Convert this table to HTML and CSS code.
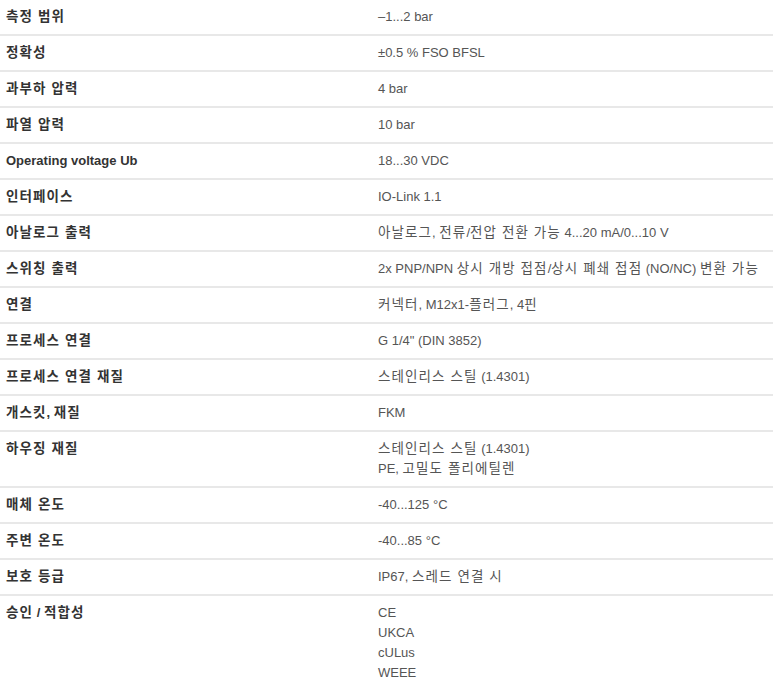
FILE: index.html
```html
<!DOCTYPE html>
<html lang="ko">
<head>
<meta charset="utf-8">
<link rel="stylesheet" href="styles.css">
</head>
<body>
<table class="specs">
<tbody>
<tr><th><span class="ko">측정 범위</span></th><td>–1...2 bar</td></tr>
<tr><th><span class="ko">정확성</span></th><td>±0.5 % FSO BFSL</td></tr>
<tr><th><span class="ko">과부하 압력</span></th><td>4 bar</td></tr>
<tr><th><span class="ko">파열 압력</span></th><td>10 bar</td></tr>
<tr><th>Operating voltage Ub</th><td>18...30 VDC</td></tr>
<tr><th><span class="ko">인터페이스</span></th><td>IO-Link 1.1</td></tr>
<tr><th><span class="ko">아날로그 출력</span></th><td><span class="ko">아날로그</span>, <span class="ko">전류</span>/<span class="ko">전압 전환 가능</span> 4...20 mA/0...10 V</td></tr>
<tr><th><span class="ko">스위칭 출력</span></th><td class="nowrap">2x PNP/NPN <span class="ko">상시 개방 접점</span>/<span class="ko">상시 폐쇄 접점</span> (NO/NC) <span class="ko">변환 가능</span></td></tr>
<tr><th><span class="ko">연결</span></th><td><span class="ko">커넥터</span>, M12x1-<span class="ko">플러그</span>, 4<span class="ko">핀</span></td></tr>
<tr><th><span class="ko">프로세스 연결</span></th><td>G 1/4" (DIN 3852)</td></tr>
<tr><th><span class="ko">프로세스 연결 재질</span></th><td><span class="ko">스테인리스 스틸</span> (1.4301)</td></tr>
<tr><th><span class="ko">개스킷</span>, <span class="ko">재질</span></th><td>FKM</td></tr>
<tr><th><span class="ko">하우징 재질</span></th><td><span class="ko">스테인리스 스틸</span> (1.4301)<br>PE, <span class="ko">고밀도 폴리에틸렌</span></td></tr>
<tr><th><span class="ko">매체 온도</span></th><td>-40...125 °C</td></tr>
<tr><th><span class="ko">주변 온도</span></th><td>-40...85 °C</td></tr>
<tr><th><span class="ko">보호 등급</span></th><td>IP67, <span class="ko">스레드 연결 시</span></td></tr>
<tr class="last"><th><span class="ko">승인</span> / <span class="ko">적합성</span></th><td>CE<br>UKCA<br>cULus<br>WEEE</td></tr>
</tbody>
</table>
</body>
</html>
```
FILE: styles.css
```css
html, body {
  margin: 0;
  padding: 0;
  background: #fff;
}
body {
  font-family: "Liberation Sans", Arial, "Noto Sans CJK KR", sans-serif;
  font-size: 13px;
  line-height: 20px;
  color: #555;
}
.specs {
  width: 773px;
  border-collapse: collapse;
  table-layout: fixed;
  margin: 0;
}
.specs th,
.specs td {
  padding: 7px 6px 7px 6px;
  vertical-align: top;
  text-align: left;
  border-bottom: 2px solid #e8e8e8;
}
.specs th {
  width: 360px;
  font-weight: bold;
  color: #333;
}
.specs td {
  padding-right: 0;
}
.specs .nowrap {
  white-space: nowrap;
}
.specs .last th,
.specs .last td {
  border-bottom: none;
}
.ko {
  font-family: "Noto Sans CJK KR", sans-serif;
  font-size: 13.5px;
  line-height: 14px;
  letter-spacing: 1.1px;
}
```
